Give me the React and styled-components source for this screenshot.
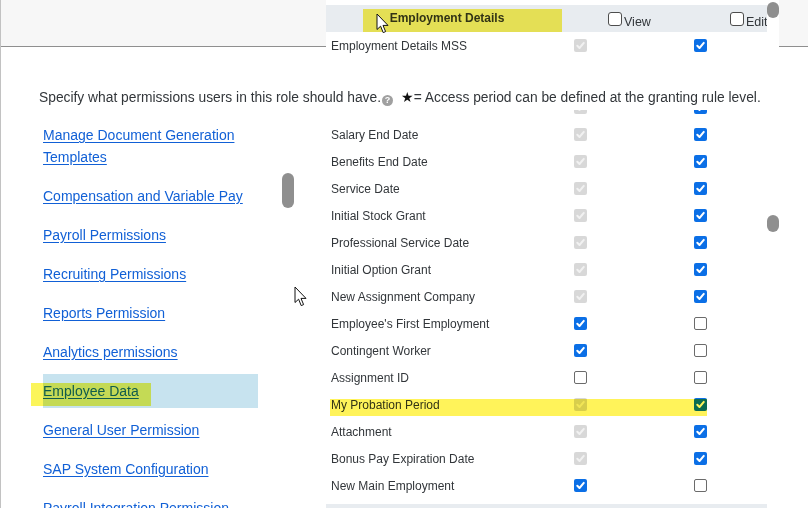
import React from "react";
import styled, { createGlobalStyle } from "styled-components";

const GlobalStyle = createGlobalStyle`
  * { box-sizing: border-box; }
  body {
    margin: 0;
    background: #ffffff;
    font-family: "Liberation Sans", Arial, sans-serif;
    color: #32363a;
  }
`;

const rows = [
  { label: "", view: "dis", edit: "on" },
  { label: "Salary End Date", view: "dis", edit: "on" },
  { label: "Benefits End Date", view: "dis", edit: "on" },
  { label: "Service Date", view: "dis", edit: "on" },
  { label: "Initial Stock Grant", view: "dis", edit: "on" },
  { label: "Professional Service Date", view: "dis", edit: "on" },
  { label: "Initial Option Grant", view: "dis", edit: "on" },
  { label: "New Assignment Company", view: "dis", edit: "on" },
  { label: "Employee's First Employment", view: "on", edit: "off" },
  { label: "Contingent Worker", view: "on", edit: "off" },
  { label: "Assignment ID", view: "off", edit: "off" },
  { label: "My Probation Period", view: "dis", edit: "on", marked: true },
  { label: "Attachment", view: "dis", edit: "on" },
  { label: "Bonus Pay Expiration Date", view: "dis", edit: "on" },
  { label: "New Main Employment", view: "on", edit: "off" },
];

const links = [
  "Manage Document Generation Templates",
  "Compensation and Variable Pay",
  "Payroll Permissions",
  "Recruiting Permissions",
  "Reports Permission",
  "Analytics permissions",
  "Employee Data",
  "General User Permission",
  "SAP System Configuration",
  "Payroll Integration Permission",
];

const Check = ({ state }) => (
  <Box $state={state}>
    {state !== "off" && (
      <svg width="13" height="13" viewBox="0 0 13 13">
        <path d="M3.3 6.8 L5.5 9 L9.8 3.9" fill="none" stroke={state === "dis" ? "#f1f1f1" : "#ffffff"} strokeWidth="2" strokeLinecap="round" strokeLinejoin="round" />
      </svg>
    )}
  </Box>
);

const Cursor = ({ x, y }) => (
  <CursorMark style={{ left: x, top: y }} width="14" height="21" viewBox="0 0 14 21">
    <path d="M1 1 L1 16.5 L4.6 13.2 L7.2 19.6 L9.6 18.6 L7 12.4 L12 12.4 Z" fill="#ffffff" stroke="#111111" strokeWidth="1" strokeLinejoin="round" />
  </CursorMark>
);

const App = () => {
  return (
    <>
      <GlobalStyle />
      <Page>
        <Top>
          <Band />
          <Panel>
            <TableCol>
              <HeadRow>
                <HeadTitle>Employment Details</HeadTitle>
                <HeadCheck $pad={34}>
                  <HeadBox />
                  <HeadLabel>View</HeadLabel>
                </HeadCheck>
                <HeadCheck $pad={36}>
                  <HeadBox />
                  <HeadLabel>Edit</HeadLabel>
                </HeadCheck>
                <HeadMark />
              </HeadRow>
              <Row>
                <Label>Employment Details MSS</Label>
                <Cell><Check state="dis" /></Cell>
                <Cell><Check state="on" /></Cell>
              </Row>
            </TableCol>
            <Track>
              <Thumb $top={2} $h={16} />
            </Track>
          </Panel>
          <Band />
        </Top>

        <Intro>
          Specify what permissions users in this role should have.
          <Help>?</Help>
          <Star>&nbsp;&nbsp;★</Star>= Access period can be defined at the granting rule level.
        </Intro>

        <Body>
          <LeftCol>
            <NavList>
              {links.map((l) => (
                <NavItem key={l} $selected={l === "Employee Data"}>
                  <Link href="#">{l}</Link>
                </NavItem>
              ))}
            </NavList>
            <Track>
              <Thumb $top={63} $h={35} />
            </Track>
          </LeftCol>

          <RightPanel>
            <TableBody>
              <Rows>
                {rows.map((r, i) => (
                  <Row key={i} $marked={r.marked}>
                    <Label>{r.label}</Label>
                    <Cell><Check state={r.view} /></Cell>
                    <Cell><Check state={r.edit} /></Cell>
                  </Row>
                ))}
                <FooterBand />
              </Rows>
            </TableBody>
            <Track>
              <Thumb $top={105} $h={17} />
            </Track>
          </RightPanel>
        </Body>

        <Cursor x={375} y={13} />
        <Cursor x={293} y={286} />
      </Page>
    </>
  );
};

export default App;

const Page = styled.div`
  position: relative;
  width: 808px;
  height: 508px;
  overflow: hidden;
  border-left: 1px solid #c2c2c2;
  background: #ffffff;
`;

const Top = styled.div`
  display: grid;
  grid-template-columns: 325px 453px 1fr;
  align-items: start;
  height: 58px;
`;

const Band = styled.div`
  height: 47px;
  background: #f7f7f7;
  border-bottom: 1px solid #8f8f8f;
`;

const Panel = styled.div`
  display: flex;
  height: 58px;
  background: #ffffff;
`;

const TableCol = styled.div`
  width: 441px;
  padding-top: 5px;
`;

const Track = styled.div`
  width: 12px;
  flex-shrink: 0;
`;

const Thumb = styled.div`
  margin-top: ${(p) => p.$top}px;
  width: 12px;
  height: ${(p) => p.$h}px;
  border-radius: 6px;
  background: #8f8f8f;
`;

const HeadRow = styled.div`
  position: relative;
  display: grid;
  grid-template-columns: 248px 120px 1fr;
  align-items: center;
  height: 27px;
  background: #e8ecf0;
  font-size: 12px;
  overflow: hidden;
`;

const HeadTitle = styled.div`
  text-align: center;
  font-weight: 700;
  padding-right: 6px;
  margin-top: -1px;
`;

const HeadCheck = styled.div`
  display: flex;
  align-items: flex-start;
  gap: 2px;
  padding-left: ${(p) => p.$pad}px;
  height: 18px;
  margin-top: 4px;
  white-space: nowrap;
`;

const HeadLabel = styled.span`
  padding-top: 3px;
  font-size: 12.5px;
  line-height: 14px;
`;

const HeadBox = styled.span`
  display: inline-block;
  width: 14px;
  height: 14px;
  border: 1px solid #4d4d4d;
  border-radius: 3px;
  background: #ffffff;
`;

const HeadMark = styled.div`
  position: absolute;
  left: 37px;
  top: 4px;
  width: 199px;
  height: 23px;
  background: #fbf15a;
  mix-blend-mode: multiply;
`;

const Row = styled.div`
  position: relative;
  display: grid;
  grid-template-columns: 248px 120px 1fr;
  align-items: center;
  height: 27px;
  font-size: 12px;

  ${(p) =>
    p.$marked &&
    `
    &::after {
      content: "";
      position: absolute;
      left: 4px;
      top: 8px;
      width: 377px;
      height: 17px;
      background: #fff35a;
      mix-blend-mode: multiply;
    }
  `}
`;

const Label = styled.div`
  padding-left: 5px;
  white-space: nowrap;
  color: #32363a;
`;

const Cell = styled.div`
  display: flex;
  align-items: center;
`;

const Box = styled.span`
  display: inline-flex;
  width: 13px;
  height: 13px;
  border-radius: 2px;
  background: ${(p) => (p.$state === "on" ? "#0b6fe6" : p.$state === "dis" ? "#d8d8d8" : "#ffffff")};
  border: ${(p) => (p.$state === "off" ? "1px solid #6b6b6b" : "none")};
`;

const Intro = styled.div`
  height: 52px;
  padding: 30px 0 0 38px;
  font-size: 13.8px;
  line-height: 20px;
  color: #32363a;
  white-space: nowrap;
`;

const Help = styled.span`
  display: inline-flex;
  align-items: center;
  justify-content: center;
  width: 11px;
  height: 11px;
  margin-left: 1px;
  border-radius: 50%;
  background: #a0a0a0;
  color: #ffffff;
  font-size: 9px;
  font-weight: 700;
  vertical-align: -1px;
`;

const Star = styled.span`
  color: #111111;
`;

const Body = styled.div`
  display: grid;
  grid-template-columns: 325px 453px;
  height: 398px;
`;

const LeftCol = styled.div`
  display: flex;
  overflow: hidden;
`;

const NavList = styled.ul`
  list-style: none;
  margin: 0;
  width: 281px;
  padding: 14px 0 0 42px;
`;

const NavItem = styled.li`
  position: relative;
  margin-bottom: 17px;
  font-size: 14px;
  line-height: 22px;

  ${(p) =>
    p.$selected &&
    `
    width: 215px;
    padding: 6px 0;
    margin-top: -6px;
    margin-bottom: 11px;
    background: #c7e3ef;
    &::after {
      content: "";
      position: absolute;
      left: -12px;
      top: 9px;
      width: 120px;
      height: 23px;
      background: #fbf55a;
      mix-blend-mode: multiply;
    }
  `}
`;

const Link = styled.a`
  color: #1160d6;
  text-decoration: underline;
  text-underline-offset: 2px;
`;

const RightPanel = styled.div`
  display: flex;
  background: #ffffff;
`;

const TableBody = styled.div`
  width: 441px;
  height: 398px;
  overflow: hidden;
`;

const Rows = styled.div`
  margin-top: -16px;
`;

const FooterBand = styled.div`
  margin-top: 5px;
  height: 30px;
  background: #e8ecf0;
`;

const CursorMark = styled.svg`
  position: absolute;
  pointer-events: none;
`;
